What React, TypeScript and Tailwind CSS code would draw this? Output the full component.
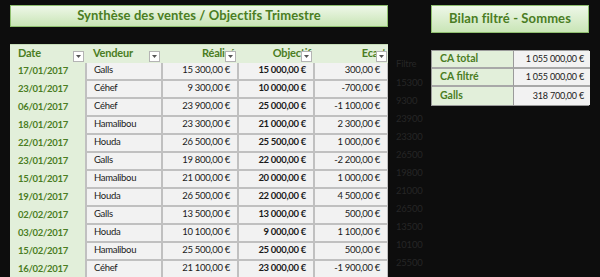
const rows = [
  ["17/01/2017", "Galls", "15 300,00 €", "15 000,00 €", "300,00 €", "15300"],
  ["23/01/2017", "Céhef", "9 300,00 €", "10 000,00 €", "-700,00 €", "9300"],
  ["06/01/2017", "Céhef", "23 900,00 €", "25 000,00 €", "-1 100,00 €", "23900"],
  ["18/01/2017", "Hamalibou", "23 300,00 €", "21 000,00 €", "2 300,00 €", "23300"],
  ["22/01/2017", "Houda", "26 500,00 €", "25 500,00 €", "1 000,00 €", "26500"],
  ["23/01/2017", "Galls", "19 800,00 €", "22 000,00 €", "-2 200,00 €", "19800"],
  ["15/01/2017", "Hamalibou", "21 000,00 €", "20 000,00 €", "1 000,00 €", "21000"],
  ["19/01/2017", "Houda", "26 500,00 €", "22 000,00 €", "4 500,00 €", "26500"],
  ["02/02/2017", "Galls", "13 500,00 €", "13 000,00 €", "500,00 €", "13500"],
  ["03/02/2017", "Houda", "10 100,00 €", "9 000,00 €", "1 100,00 €", "10100"],
  ["15/02/2017", "Hamalibou", "25 500,00 €", "25 000,00 €", "500,00 €", "25500"],
  ["16/02/2017", "Céhef", "21 100,00 €", "23 000,00 €", "-1 900,00 €", "21100"],
];

const bilan = [
  ["CA total", "1 055 000,00 €"],
  ["CA filtré", "1 055 000,00 €"],
  ["Galls", "318 700,00 €"],
];

const FilterButton = () => (
  <span className="absolute right-[1px] bottom-[1px] w-[11px] h-[11px] bg-white border border-[#b4b4b4] flex items-center justify-center">
    <svg width="5" height="3" viewBox="0 0 5 3">
      <path d="M0 0 L5 0 L2.5 3 Z" fill="#555" />
    </svg>
  </span>
);

const TitleBar = ({ text, width }: { text: string; width: string }) => (
  <div
    className={`${width} h-[28px] flex items-center justify-center border border-[#8fbf6f] bg-gradient-to-b from-[#eef7e8] to-[#c9e5b6] text-[#4a7d23] text-[13px] font-bold tracking-[0.1px]`}
  >
    {text}
  </div>
);

const headCell = "relative h-[19px] flex items-center text-[#4a7d23] font-bold text-[11px] tracking-[-0.2px] border-t border-[#c6dcb8] overflow-hidden";
const dataCell = "h-[18px] flex items-center bg-[#f2f2f2] border-l-2 border-b-2 border-[#c0c0c0] text-[#1a1a1a]";

export default function App() {
  return (
    <div
      className="w-[600px] h-[277px] overflow-hidden bg-[#0d0d0d] flex pt-[5px] pl-[10px]"
      style={{ fontFamily: "Lato, 'Open Sans', sans-serif" }}
    >
      {/* Synthèse */}
      <div className="flex flex-col w-[378px]">
        <TitleBar text="Synthèse des ventes / Objectifs Trimestre" width="w-[378px]" />
        <div className="mt-[17px] grid grid-cols-[75px_76px_76px_76px_75px] bg-[#e2efda] text-[9.5px] tracking-[-0.3px]">
          <div className={`${headCell} pl-[8px]`}>
            Date
            <FilterButton />
          </div>
          <div className={`${headCell} pl-[8px]`}>
            Vendeur
            <FilterButton />
          </div>
          <div className={`${headCell} justify-end pr-[2px]`}>
            Réalisé
            <FilterButton />
          </div>
          <div className={`${headCell} justify-end pr-[2px]`}>
            Objectif
            <FilterButton />
          </div>
          <div className={`${headCell} justify-end pr-[2px]`}>
            Ecart
            <FilterButton />
          </div>
          {rows.map((r, i) => (
            <div key={i} className="contents">
              <div className="h-[18px] pl-[8px] flex items-center text-[#4a7d23] font-bold">{r[0]}</div>
              <div className={`${dataCell} pl-[7px]`}>{r[1]}</div>
              <div className={`${dataCell} justify-end pr-[7px]`}>{r[2]}</div>
              <div className={`${dataCell} justify-end pr-[7px] font-bold`}>{r[3]}</div>
              <div className={`${dataCell} justify-end pr-[7px] border-r`}>{r[4]}</div>
            </div>
          ))}
        </div>
      </div>

      {/* hidden helper column */}
      <div className="w-[43px] pt-[50px] pl-[8px] text-[9.5px] tracking-[-0.2px] text-[#262626]">
        <div className="h-[19px] flex items-center">Filtre</div>
        {rows.map((r, i) => (
          <div key={i} className="h-[18px] flex items-center">{r[5]}</div>
        ))}
      </div>

      {/* Bilan */}
      <div className="flex flex-col w-[158px]">
        <TitleBar text="Bilan filtré - Sommes" width="w-[158px]" />
        <div className="mt-[17px] grid grid-cols-[82px_76px] border border-[#9a9a9a]">
          {bilan.map((b, i) => (
            <div key={i} className="contents">
              <div className={`h-[18px] pl-[8px] flex items-center bg-[#e2efda] text-[#4a7d23] font-bold text-[10.5px] border-r border-[#9a9a9a] ${i < 2 ? "border-b-2 border-b-[#a8a8a8]" : ""}`}>
                {b[0]}
              </div>
              <div className={`h-[18px] pr-[6px] flex items-center justify-end bg-[#f2f2f2] text-[#1a1a1a] text-[9px] tracking-[-0.2px] ${i < 2 ? "border-b-2 border-b-[#a8a8a8]" : ""}`}>
                {b[1]}
              </div>
            </div>
          ))}
        </div>
      </div>
    </div>
  );
}
